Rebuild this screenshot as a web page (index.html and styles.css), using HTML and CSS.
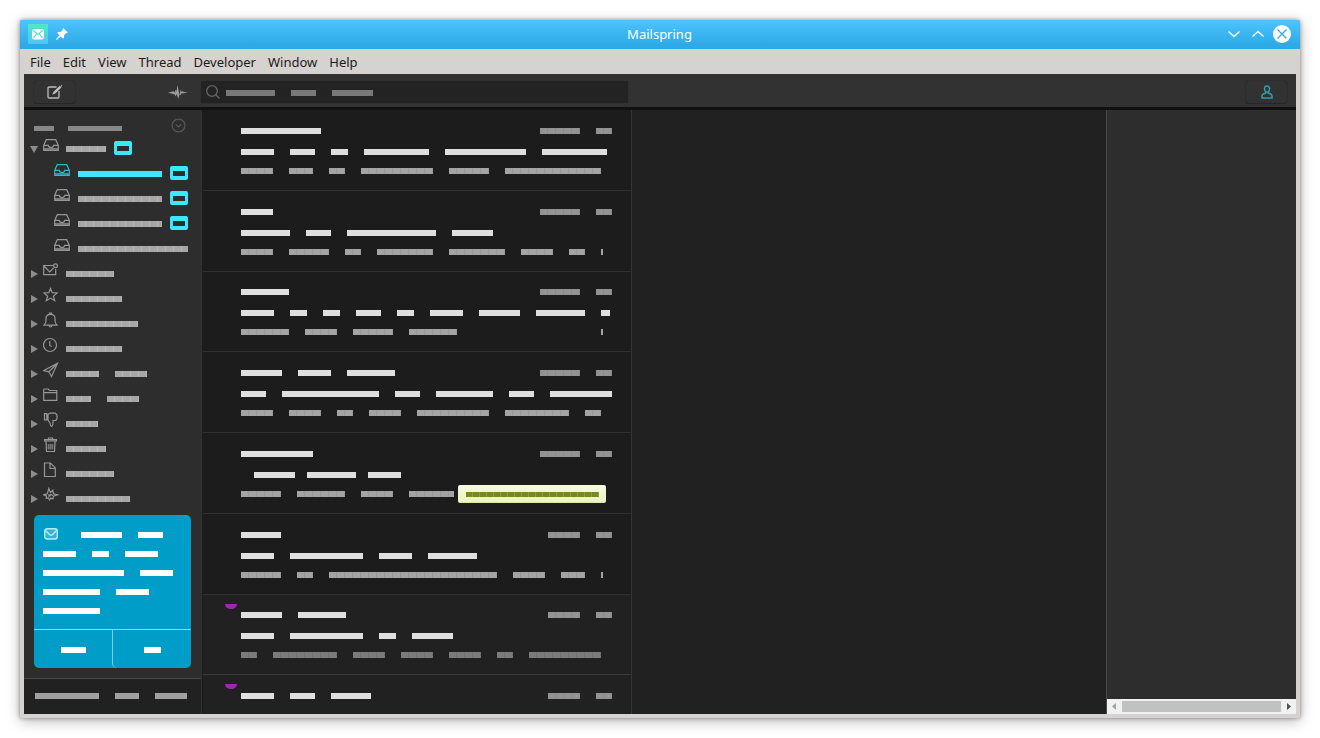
FILE: index.html
```html
<!DOCTYPE html>
<html lang="en">
<head>
<meta charset="utf-8">
<title>Mailspring</title>
<link rel="stylesheet" href="styles.css">
</head>
<body>
<svg class="defs" aria-hidden="true">
  <symbol id="inbox" viewBox="0 0 16 12"><path d="M.7 6.3 3.3 .7h9.4l2.6 5.6v5H.7zM.7 6.3h4.6q.4 2.2 2.7 2.2t2.7-2.2h4.6M1 9.8h14"/></symbol>
  <symbol id="down" viewBox="0 0 8 8"><path d="M0 1h8L4 8z"/></symbol>
  <symbol id="right" viewBox="0 0 8 8"><path d="M1 0v8l7-4z"/></symbol>
</svg>
<div class="window">
  <header class="titlebar">
    <div class="title-left">
      <svg class="app-icon" viewBox="0 0 20 20"><defs><linearGradient id="g" x2="0" y2="1"><stop stop-color="#54e8c5"/><stop offset="1" stop-color="#50c3fa"/></linearGradient></defs><path fill="url(#g)" d="M0 0h20v20H0z"/><rect x="4" y="5" width="12" height="10.500" rx="2.500" fill="#fff"/><path d="m5.500 6.500 4.500 4 4.500-4M5.500 14l3-3.800M14.500 14l-3-3.800" fill="none" stroke="#5fd4dc" stroke-width="1.200"/></svg>
      <svg class="pin" viewBox="0 0 12 12"><path fill="#fff" d="m7.300 0 4.500 4.500-1 .8-.7-.2-2.200 2.300.2 2.400-1 1-2.300-2.300L.8 12 0 11.200l3.400-4-2.300-2.300 1-1 2.500.2 2.200-2.300-.2-.8z"/></svg>
    </div>
    <h1>Mailspring</h1>
    <div class="title-right">
      <button aria-label="Minimize"><svg viewBox="0 0 18 18"><path d="m3.500 6.500 5.500 5 5.500-5"/></svg></button>
      <button aria-label="Maximize"><svg viewBox="0 0 18 18"><path d="m3.500 11.500 5.500-5 5.500 5"/></svg></button>
      <button class="close" aria-label="Close"><svg viewBox="0 0 18 18"><path d="m4.500 4.500 9 9m0-9-9 9"/></svg></button>
    </div>
  </header>
  <nav class="menubar">
    <button>File</button><button>Edit</button><button>View</button><button>Thread</button><button>Developer</button><button>Window</button><button>Help</button>
  </nav>
  <div class="app">
    <div class="toolbar">
      <div class="tools">
        <button class="tool" aria-label="Compose"><svg class="compose" viewBox="0 0 16 14"><path d="M9.500 2H2.200Q1 2 1 3.200v8.600Q1 13 2.200 13h8.600q1.200 0 1.200-1.200V6"/><path class="pen" d="m6.500 8.500.6-1.500L12.700 1.700l.8.8-5.300 5.300zM14 .5l.8.8"/></svg></button>
        <svg class="pulse" viewBox="0 0 20 14"><path d="M0 7.600 5.800 6.300l.8 1.200 1.300-3 .8 1.500L9.500 0l2 10 1.200-5.500 1 2.500 1.200-1 .8 1 4.300.6-5.300 1-1.300-.4L12.500 10.500l-1-1.500-1.200 5-1.600-5-1 2.500-1.200-2.500-.8.300z"/></svg>
      </div>
      <div class="search">
        <input type="text" id="search" aria-label="Search">
        <label for="search" class="search-label"><svg viewBox="0 0 14 14"><circle cx="6" cy="6" r="5.300"/><path d="m10 10 3.500 3.500"/></svg><span class="bars wide" data-bars="49 25 41"></span></label>
      </div>
      <button class="tool person" aria-label="Profile"><svg viewBox="0 0 12 14"><path d="M6 1q2.600 0 2.500 2.700Q8.400 6 7.300 7H4.700Q3.600 6 3.500 3.700 3.400 1 6 1zM4.600 7v1.200Q1 8.800 1 11v2h10v-2q0-2.200-3.600-2.800V7"/></svg></button>
    </div>
    <main class="columns">
      <aside class="sidebar">
        <div class="account">
          <span class="bars" data-bars="20 54"></span>
          <button aria-label="Switch account"><svg viewBox="0 0 14 14"><circle cx="7" cy="7" r="6"/><path d="M4.500 6 7 8.300 9.500 6"/></svg></button>
        </div>
        <ul class="folders">
          <li><svg class="arrow"><use href="#down"/></svg><svg class="ico inbox"><use href="#inbox"/></svg><span class="bars" data-bars="40"></span><b></b></li>
          <li class="child active"><svg class="ico inbox"><use href="#inbox"/></svg><span class="bars" data-bars="84"></span><b></b></li>
          <li class="child"><svg class="ico inbox"><use href="#inbox"/></svg><span class="bars" data-bars="84"></span><b></b></li>
          <li class="child"><svg class="ico inbox"><use href="#inbox"/></svg><span class="bars" data-bars="84"></span><b></b></li>
          <li class="child"><svg class="ico inbox"><use href="#inbox"/></svg><span class="bars" data-bars="110"></span></li>
          <li><svg class="arrow"><use href="#right"/></svg><svg class="ico" viewBox="0 0 16 16"><path d="M10 3.500H.7v9.200h12V7M1 4l5.700 5.800L10.500 6"/><circle cx="12.500" cy="3.700" r="1.900"/></svg><span class="bars" data-bars="48"></span></li>
          <li><svg class="arrow"><use href="#right"/></svg><svg class="ico" viewBox="0 0 16 16"><path d="m7.500 1.500 1.800 4.200 4.800.3-3.700 3.100 1.300 4.600-4.200-2.600-4.200 2.600 1.300-4.600-3.700-3.100 4.800-.3z"/></svg><span class="bars" data-bars="56"></span></li>
          <li><svg class="arrow"><use href="#right"/></svg><svg class="ico" viewBox="0 0 16 16"><path d="M1 13.200h13q-2-2-2-4.500V6.500Q12 2.300 7.500 2.300T3 6.500v2.200q0 2.500-2 4.500zM6.500 2V1h2v1M6 13.500q.2 1.500 1.500 1.500T9 13.500"/></svg><span class="bars" data-bars="72"></span></li>
          <li><svg class="arrow"><use href="#right"/></svg><svg class="ico" viewBox="0 0 16 16"><circle cx="7" cy="8" r="6.500"/><path d="M6.800 4v4.500l2 1"/></svg><span class="bars" data-bars="56"></span></li>
          <li><svg class="arrow"><use href="#right"/></svg><svg class="ico" viewBox="0 0 16 16"><path d="M14.500 1.300.8 8.500l5 1.300L8.500 14.500zM5.800 9.800l8.700-8.500"/></svg><span class="bars" data-bars="33 32"></span></li>
          <li><svg class="arrow"><use href="#right"/></svg><svg class="ico" viewBox="0 0 16 16"><path d="M.7 13.300V2.500q0-.5.500-.5h4l1.300 1.500h7.300v9.800zM.7 5.700h13.100"/></svg><span class="bars" data-bars="25 32"></span></li>
          <li><svg class="arrow"><use href="#right"/></svg><svg class="ico" viewBox="0 0 16 16"><path d="M1.500 1.700h2.300v6.200H1.500zM5 2.500q1-1.300 2.500-1.300h4.800L14 3v3.500L12.800 8.300 10 8.500q.2 5.500-1.400 5.800Q7.500 14.500 7 11L5 8z"/></svg><span class="bars" data-bars="32"></span></li>
          <li><svg class="arrow"><use href="#right"/></svg><svg class="ico" viewBox="0 0 16 16"><path d="M1.500 4V2.700h12V4zM5.500 2.500V1h4v1.500M3 4.500l.5 10h8l.5-10"/><path class="slats" d="M5.500 7v5.500m2-5.500v5.500m2-5.500v5.500"/></svg><span class="bars" data-bars="40"></span></li>
          <li><svg class="arrow"><use href="#right"/></svg><svg class="ico" viewBox="0 0 16 16"><path d="M1.500 1h6l4.800 5v8.500H1.500zM7 1.500v5h5"/></svg><span class="bars" data-bars="48"></span></li>
          <li><svg class="arrow"><use href="#right"/></svg><svg class="ico" viewBox="0 0 16 16"><path d="m5.800 1.500 1.700 4 2.300-2.200.6 3.500 4 1-4 1.400-.5 2.800-2.200-.9L6.500 13l-1.300-2-2 .5.300-2.500L.5 7.800l3.800-1zM6 7v2.500l2-2 2 1"/></svg><span class="bars" data-bars="64"></span></li>
        </ul>
        <section class="card">
          <div class="card-text">
            <div class="first"><svg viewBox="0 0 14 12"><rect x=".7" y=".7" width="12.600" height="10.300" rx="2.500"/><path d="m1.500 2.500 4 4q1.500 1.300 3 0l4-4"/></svg><span class="bars" data-bars="41 25"></span></div>
            <span class="bars" data-bars="33 17 33"></span>
            <span class="bars" data-bars="81 33"></span>
            <span class="bars" data-bars="57 33"></span>
            <span class="bars" data-bars="57"></span>
          </div>
          <div class="card-actions">
            <button aria-label="Dismiss"><span class="bars" data-bars="25"></span></button>
            <button aria-label="Accept"><span class="bars" data-bars="17"></span></button>
          </div>
        </section>
        <footer class="status"><span class="bars" data-bars="64 24 32"></span></footer>
      </aside>
      <section class="threads">
        <article>
          <div class="from"><span class="bars" data-bars="80"></span><span class="bars date" data-bars="40 16"></span></div>
          <div class="bars subject" data-bars="33 25 17 65 81 65"></div>
          <div class="bars snippet" data-bars="32 24 16 72 40 96"></div>
        </article>
        <article>
          <div class="from"><span class="bars" data-bars="32"></span><span class="bars date" data-bars="40 16"></span></div>
          <div class="bars subject" data-bars="49 25 89 41"></div>
          <div class="bars snippet" data-bars="32 40 16 56 56 32 16 2"></div>
        </article>
        <article>
          <div class="from"><span class="bars" data-bars="48"></span><span class="bars date" data-bars="40 16"></span></div>
          <div class="bars subject" data-bars="33 17 17 25 17 33 41 49 9"></div>
          <div class="bars snippet tail" data-bars="48 32 40 48 2"></div>
        </article>
        <article>
          <div class="from"><span class="bars" data-bars="41 33 48"></span><span class="bars date" data-bars="40 16"></span></div>
          <div class="bars subject" data-bars="25 97 25 57 25 70"></div>
          <div class="bars snippet" data-bars="32 32 16 32 72 64 16"></div>
        </article>
        <article>
          <div class="from"><span class="bars" data-bars="72"></span><span class="bars date" data-bars="40 16"></span></div>
          <div class="bars subject indented" data-bars="41 49 33"></div>
          <div class="labelled"><div class="bars snippet" data-bars="40 48 32 45"></div><span class="label"><span class="bars" data-bars="133"></span></span></div>
        </article>
        <article>
          <div class="from"><span class="bars" data-bars="40"></span><span class="bars date" data-bars="32 16"></span></div>
          <div class="bars subject" data-bars="33 73 33 49"></div>
          <div class="bars snippet" data-bars="40 16 168 32 24 2"></div>
        </article>
        <article class="read">
          <div class="from"><span class="bars" data-bars="41 48"></span><span class="bars date" data-bars="32 16"></span></div>
          <div class="bars subject" data-bars="33 73 17 41"></div>
          <div class="bars snippet" data-bars="16 64 32 32 32 16 72"></div>
        </article>
        <article class="read">
          <div class="from"><span class="bars" data-bars="33 25 40"></span><span class="bars date" data-bars="32 16"></span></div>
        </article>
      </section>
      <section class="message"></section>
      <aside class="details">
        <div class="scrollbar"><svg viewBox="0 0 15 15"><path fill="#a3a3a3" d="M9 4v7L5 7.500z"/></svg><div class="thumb"></div><svg viewBox="0 0 15 15"><path fill="#505050" d="M6 4v7l4-3.500z"/></svg></div>
      </aside>
    </main>
  </div>
</div>
<script src="bars.js"></script>
</body>
</html>
```

FILE: styles.css
```css
* { box-sizing: border-box; }
body { margin: 0; height: 100vh; padding: 20px; background: #fff; font-family: "Noto Sans", sans-serif; font-size: 13px; }
button { border: 0; padding: 0; background: none; color: inherit; font: inherit; }
svg { display: block; flex: none; fill: none; }
.defs { position: absolute; width: 0; height: 0; }

.window { height: 100%; display: flex; flex-direction: column; background: #d6d2cf; border-radius: 2px; box-shadow: 0 3px 14px rgba(0,0,0,.28), 0 0 4px rgba(0,0,0,.4); overflow: hidden; }
.titlebar { height: 29px; flex: none; display: grid; grid-template-columns: 1fr auto 1fr; align-items: center; padding: 0 9px 1px 8px; background: linear-gradient(#4cc4ff, #2eaae6 85%); color: #fff; }
.titlebar h1 { margin: 0; font: 400 13px "Noto Sans", sans-serif; }
.title-left, .title-right { display: flex; align-items: center; gap: 8px; }
.title-right { justify-content: flex-end; gap: 6px; }
.app-icon { width: 20px; height: 20px; }
.pin { width: 12px; height: 12px; }
.title-right svg { width: 18px; height: 18px; stroke: #fff; stroke-width: 1.3; }
.title-right .close { background: #fff; border-radius: 50%; }
.title-right .close svg { stroke: #2eaae6; }
.menubar { height: 25px; flex: none; display: flex; gap: 12px; padding: 0 10px; color: #1d1a18; }

.app { flex: 1; min-height: 0; margin: 0 4px 4px; display: flex; flex-direction: column; }
.toolbar { height: 36px; flex: none; display: flex; align-items: center; background: #323232; border-bottom: 3px solid #111; padding-right: 9px; padding-top: 3px; }
.tools { width: 177px; display: flex; justify-content: space-between; align-items: center; padding: 0 13px 0 10px; }
.tool { width: 41px; height: 22px; display: grid; place-items: center; border-radius: 3px; box-shadow: 0 0 1px #161616, 0 1px 1px rgba(0,0,0,.2); }
.compose { width: 16px; height: 14px; stroke: #bdbdbd; stroke-width: 1.3; }
.compose .pen { fill: #bdbdbd; }
.pulse { width: 20px; height: 14px; fill: #9b9b9b; }
.search { width: 427px; position: relative; }
.search input { display: block; width: 100%; height: 22px; border: 0; border-radius: 2px; background: #232323; color: #ccc; padding: 0 24px; box-shadow: 0 0 1px #1a1a1a; }
.search-label { position: absolute; inset: 0; display: flex; gap: 6px; padding: 4px 5px; color: #797979; }
.search-label svg { width: 14px; height: 14px; stroke: #666; stroke-width: 1.3; }
.search-label .bars { margin-top: 5px; }
.person { margin-left: auto; }
.person svg { width: 12px; height: 14px; stroke: #2f9fae; stroke-width: 1.5; }

.bars { display: flex; gap: 16px; height: 6px; overflow: hidden; flex: none; }
.bars i { flex: none; height: 100%; background: currentColor; }

.columns { flex: 1; min-height: 0; display: flex; }
.sidebar { width: 178px; flex: none; display: flex; flex-direction: column; background: #2d2d2d; color: #a7a7a7; border-right: 1px solid #303030; }
.sidebar .folders i { background: repeating-linear-gradient(90deg, #a7a7a7 0 7px, #b4b4b4 7px 8px); }
.account { height: 26px; display: flex; justify-content: space-between; padding: 8px 15px 0 10px; color: #888; }
.account .bars { height: 5px; margin-top: 8px; gap: 14px; }
.account svg { width: 15px; height: 15px; stroke: #555; stroke-width: 1.2; }
.account button { height: 15px; }
.folders { list-style: none; margin: 0; padding: 0; }
.folders li { height: 25px; display: flex; align-items: center; padding-left: 6px; color: #a7a7a7; }
.folders .child { padding-left: 30px; }
.arrow { width: 8px; height: 8px; fill: #8c8c8c; margin-right: 5px; }
.ico { width: 16px; height: 16px; margin: -7px 7px 0 0; stroke: #979797; stroke-width: 1.2; }
.ico .slats { stroke: #777; stroke-width: 1.6; }
.ico.inbox { height: 12px; margin-top: -8px; }
.child .ico { margin-right: 8px; }
.folders b { width: 18px; height: 14px; margin: 0 0 2px 8px; background: #2d2d2d; border: solid #3be8ff; border-width: 5px 3px 4px; border-radius: 2px; }
.folders .active .ico { stroke: #2fb9cb; }
.sidebar .folders .active i { background: #3be8ff; }
.card { margin: 4px 10px 0; border-radius: 5px; background: #009dc8; color: #fff; overflow: hidden; }
.card-text { height: 114px; padding: 17px 9px 0; display: flex; flex-direction: column; gap: 13px; }
.first { height: 6px; display: flex; align-items: center; gap: 23px; }
.first svg { width: 14px; height: 12px; margin: 0 0 2px 1px; stroke: #b6f0f8; stroke-width: 1.4; fill: #35b2d2; }
.card-actions { height: 39px; display: flex; border-top: 1px solid #8dd6e8; }
.card-actions button { flex: 1; display: grid; place-items: center; padding-top: 2px; }
.card-actions button + button { border-left: 1px solid #7acde2; border-bottom-left-radius: 5px; }
.status { height: 36px; margin-top: auto; padding: 14px 11px; background: #212121; border-top: 1px solid #4a4a4a; color: #a0a0a0; }

.threads { width: 430px; flex: none; overflow: hidden; background: #1c1c1c; border-right: 1px solid #333; }
.threads article { height: 81px; margin-left: 1px; padding: 18px 19px 0 38px; display: flex; flex-direction: column; gap: 15px; border-bottom: 1px solid #303030; color: #dfdfdf; position: relative; }
.threads article:nth-child(4n+3) { height: 80px; padding-top: 17px; }
.from { display: flex; justify-content: space-between; }
.date { color: #939393; }
.subject { flex: none; }
.subject + * { margin-top: -2px; }
.snippet { color: #a3a3a3; }
.date i { background: repeating-linear-gradient(90deg, #939393 0 7px, #8b8b8b 7px 8px); }
.snippet i { background: repeating-linear-gradient(90deg, #a3a3a3 0 7px, #999 7px 8px); }
.tail { padding-right: 9px; }
.tail i:last-child { margin-left: auto; }
.indented { gap: 12px; padding-left: 13px; }
.labelled { height: 6px; display: flex; align-items: center; gap: 4px; }
.label { height: 18px; padding: 7px 7px 0 8px; border-radius: 2px; background: linear-gradient(#f6f9df, #eef2c6); border: 1px solid #dfe7a2; border-width: 0 0 1px; color: #7a8728; }
.label .bars { height: 5px; }
.label i { background: repeating-linear-gradient(90deg, #7a8728 0 6px, #8f9c40 6px 7px); }
.threads .read { background: #212121; border-bottom-color: #3a3a3a; }
.read .snippet i { background: repeating-linear-gradient(90deg, #7b7b7b 0 7px, #737373 7px 8px); }
.read::before { content: ""; position: absolute; left: 22px; top: 9px; width: 12px; height: 5px; border-radius: 0 0 6px 6px; background: #9c27b0; }

.message { flex: 1; background: #212121; border-right: 1px solid #484848; }
.details { width: 189px; flex: none; display: flex; flex-direction: column; justify-content: flex-end; background: #2d2d2d; }
.scrollbar { height: 15px; display: flex; align-items: center; background: #f1f1f1; }
.scrollbar svg { width: 15px; height: 15px; }
.thumb { flex: 1; height: 11px; background: #c1c1c1; }
```

FILE: bars.js
```js
// Fills each text placeholder with one block per word.
document.querySelectorAll('[data-bars]').forEach(el => {
  el.dataset.bars.split(' ').forEach(w => {
    const word = document.createElement('i');
    word.style.width = w + 'px';
    el.append(word);
  });
});
```
